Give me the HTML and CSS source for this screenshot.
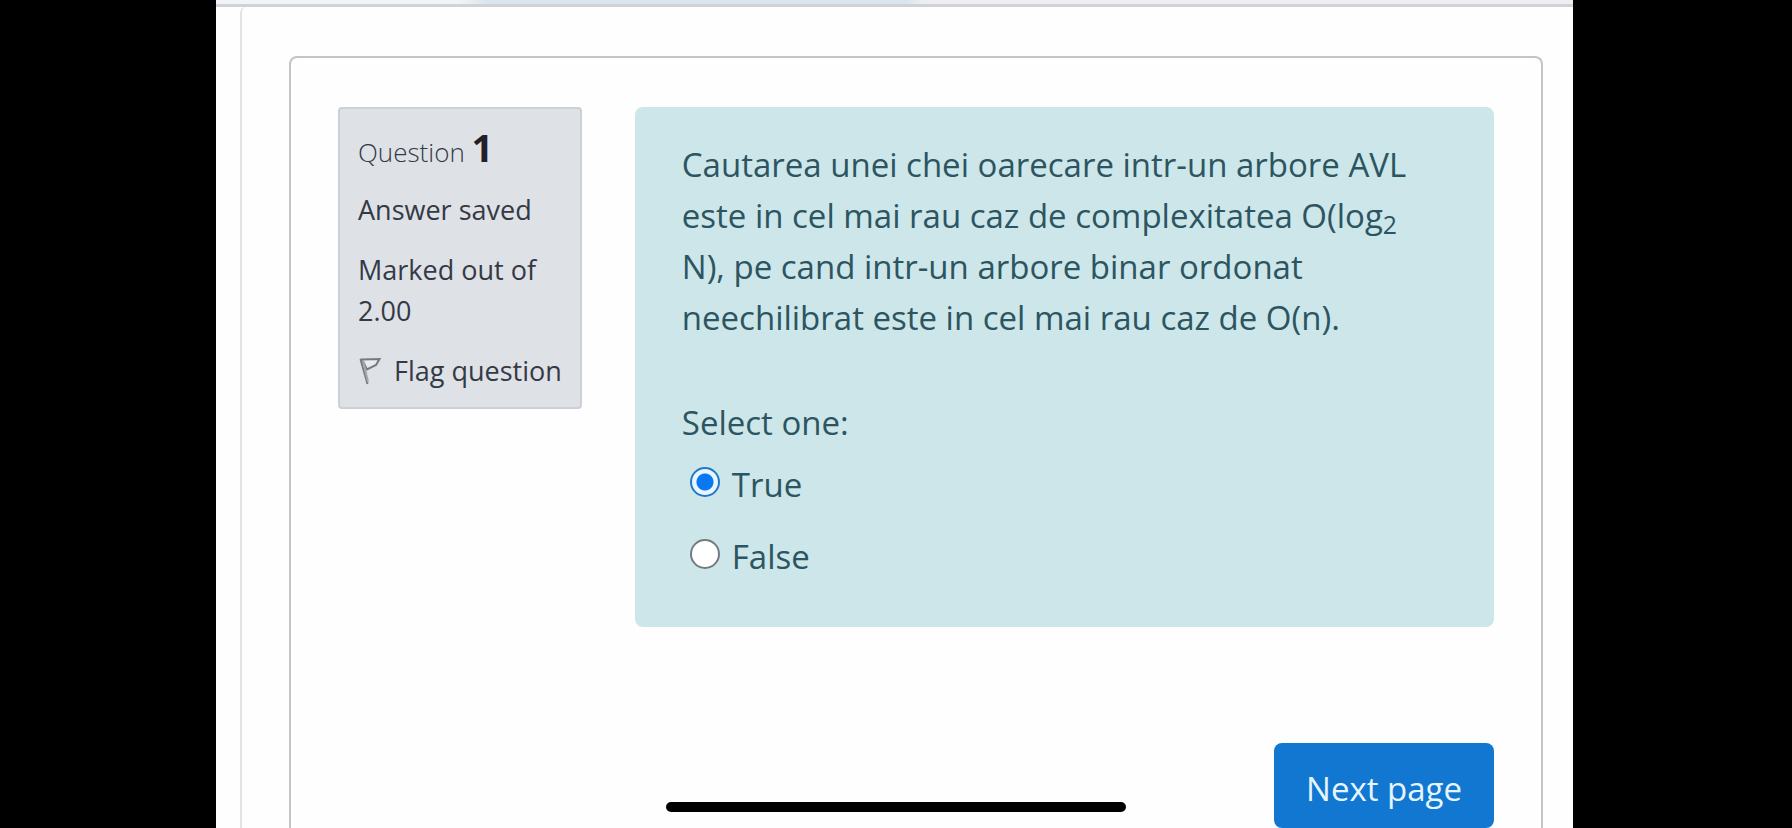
FILE: index.html
```html
<!DOCTYPE html>
<html lang="ro">
<head>
<meta charset="utf-8">
<meta name="viewport" content="width=device-width, initial-scale=1">
<title>Question 1</title>
<link rel="stylesheet" href="styles.css">
</head>
<body>
<div class="screen">
  <div class="topbar"></div>
  <main class="region">
    <form class="card">
      <div class="question">
        <aside class="info">
          <h3 class="info-title">Question <span class="number">1</span></h3>
          <p class="info-line">Answer saved</p>
          <p class="info-line">Marked out of 2.00</p>
          <a class="flag" href="#">
            <svg class="flag-icon" viewBox="0 0 24 30" aria-hidden="true">
              <path class="flag-cloth" d="M4 3.5 L21.500 3 L18 9 L9 13.500 Z"/>
              <path class="flag-pole" d="M2.500 3 L9.500 28"/>
              <path class="flag-shade" d="M5 4 L10 26"/>
            </svg>
            <span>Flag question</span>
          </a>
        </aside>
        <section class="content">
          <p class="text">Cautarea unei chei oarecare intr-un arbore AVL este in cel mai rau caz de complexitatea O(log<sub>2</sub> N), pe cand intr-un arbore binar ordonat neechilibrat este in cel mai rau caz de O(n).</p>
          <fieldset class="answers">
            <legend class="prompt">Select one:</legend>
            <label class="answer"><input class="radio" type="radio" name="answer" value="1" checked><span>True</span></label>
            <label class="answer"><input class="radio" type="radio" name="answer" value="0"><span>False</span></label>
          </fieldset>
        </section>
      </div>
      <div class="actions">
        <button class="next" type="button">Next page</button>
      </div>
    </form>
  </main>
</div>
<div class="home-indicator"></div>
</body>
</html>
```
FILE: styles.css
```css
* {
  box-sizing: border-box;
}

body {
  margin: 0;
  height: 100vh;
  overflow: hidden;
  background: #000;
  font-family: "Open Sans", "Noto Sans", sans-serif;
  color: #343a45;
}

.screen {
  display: flex;
  flex-direction: column;
  height: 100vh;
  overflow: hidden;
  margin: 0 219px 0 216px;
  background: #fefefe;
}

.topbar {
  height: 7px;
  flex: none;
  border-bottom: 3px solid #d0d3d6;
  background: linear-gradient(90deg, #f0f3f7 0 18%, #dce5ec 20% 51%, #ededf3 52%);
}

.region {
  flex: 1;
  margin-left: 24px;
  padding: 49px 30px 0 47px;
  border-left: 2px solid #e2e2e4;
  border-top-left-radius: 6px;
}

.card {
  padding: 49px 47px 0;
  border: 2px solid #c4c4c6;
  border-bottom: 0;
  border-radius: 8px 8px 0 0;
}

.question {
  display: flex;
  align-items: flex-start;
  gap: 53px;
}

.info {
  flex: 0 0 243px;
  padding: 18px 18px 16px;
  border: 2px solid #cdd0d5;
  border-radius: 4px;
  background: #dee1e6;
  font-size: 27px;
  line-height: 41px;
}

.info-title {
  margin: 0 0 16px;
  font-size: 26px;
  font-weight: 300;
}

.number {
  font-size: 38px;
  font-weight: 700;
  color: #221f2b;
}

.info-line {
  margin: 0 0 19px;
}

.flag {
  display: flex;
  align-items: center;
  gap: 12px;
  color: inherit;
  text-decoration: none;
  white-space: nowrap;
}

.flag-icon {
  flex: none;
  width: 24px;
  height: 30px;
  fill: none;
  stroke: #77797d;
  stroke-width: 2;
}

.flag-cloth {
  fill: #e9ebee;
}

.flag-shade {
  stroke: #a6a8ac;
}

.content {
  flex: 1;
  padding: 32px 80px 24px 47px;
  border-radius: 8px;
  background: #cde6e9;
  color: #2c5561;
  font-size: 33px;
  line-height: 51px;
}

.text {
  margin: 0 0 54px;
}

.text sub {
  font-size: 75%;
  line-height: 0;
  vertical-align: -6px;
}

.answers {
  margin: 0;
  padding: 0;
  border: 0;
}

.prompt {
  margin-bottom: 11px;
  padding: 0;
}

.answer {
  display: flex;
  align-items: center;
  gap: 12px;
  margin-bottom: 21px;
  padding-left: 8px;
}

.radio {
  appearance: none;
  flex: none;
  width: 30px;
  height: 30px;
  margin: 0 0 6px;
  border: 2px solid #757a7e;
  border-radius: 50%;
  background: #fff;
}

.radio:checked {
  border-color: #2377c8;
  background: radial-gradient(circle, #0a78f0 8px, #e9f6ff 9px);
}

.actions {
  display: flex;
  justify-content: flex-end;
  margin-top: 116px;
}

.next {
  padding: 20px 32px 14px;
  border: 0;
  border-radius: 8px;
  background: #1177d1;
  color: #e6f5fc;
  font: inherit;
  font-size: 33px;
  line-height: 51px;
}

.home-indicator {
  position: fixed;
  bottom: 16px;
  left: 50%;
  width: 460px;
  height: 10px;
  margin-left: -230px;
  border-radius: 5px;
  background: #000;
}
```
